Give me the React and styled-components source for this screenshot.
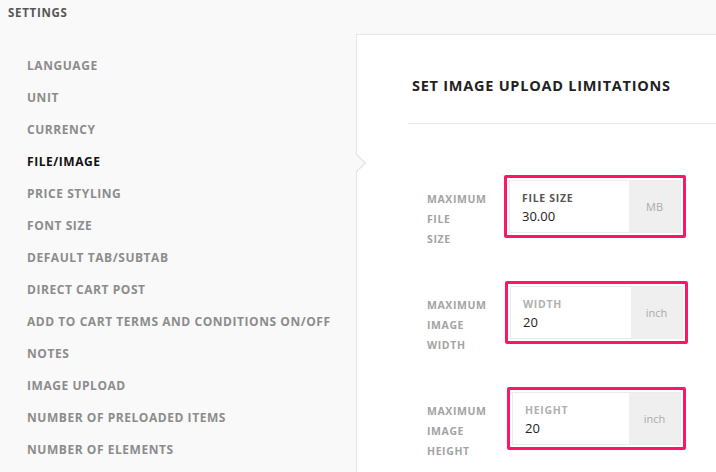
import React from 'react';
import styled, { createGlobalStyle } from 'styled-components';

const GlobalStyle = createGlobalStyle`
  * { box-sizing: border-box; }
  body {
    margin: 0;
    background: #f9f9f9;
    font-family: "Open Sans", "DejaVu Sans", sans-serif;
  }
`;

const menu = [
  'Language',
  'Unit',
  'Currency',
  'File/Image',
  'Price styling',
  'Font size',
  'Default tab/subtab',
  'Direct cart post',
  'Add to cart terms and conditions on/off',
  'Notes',
  'Image upload',
  'Number of preloaded items',
  'Number of elements',
];

// the pink boxes are hand-drawn highlights, so they differ a little
const limits = [
  { label: ['Maximum', 'file', 'size'], field: 'File size', value: '30.00', unit: 'MB', focused: true, width: 182, shift: 0 },
  { label: ['Maximum', 'image', 'width'], field: 'Width', value: '20', unit: 'inch', width: 183, shift: 1 },
  { label: ['Maximum', 'image', 'height'], field: 'Height', value: '20', unit: 'inch', width: 179, shift: 3 },
];

const App = () => (
  <>
    <GlobalStyle />
    <Page>
      <Header>Settings</Header>
      <Body>
        <Sidebar>
          {menu.map((item) => (
            <MenuItem key={item} $active={item === 'File/Image'}>{item}</MenuItem>
          ))}
        </Sidebar>
        <Panel>
          <Arrow />
          <Title>Set image upload limitations</Title>
          <Divider />
          <Rows>
            {limits.map((row) => (
              <Row key={row.field}>
                <Label>
                  {row.label.map((l) => <span key={l}>{l}</span>)}
                </Label>
                <Highlight $width={row.width} $shift={row.shift}>
                  <InputGroup>
                    <Field>
                      <FieldLabel $focused={row.focused}>{row.field}</FieldLabel>
                      <Value>{row.value}</Value>
                    </Field>
                    <Unit>{row.unit}</Unit>
                  </InputGroup>
                </Highlight>
              </Row>
            ))}
          </Rows>
        </Panel>
      </Body>
    </Page>
  </>
);

const Page = styled.div`
  display: flex;
  flex-direction: column;
  height: 472px;
  overflow: hidden;
`;

const Header = styled.div`
  flex-shrink: 0;
  height: 34px;
  padding: 5px 0 0 8px;
  font-size: 11.5px;
  font-weight: 700;
  letter-spacing: 0.7px;
  color: #555;
  text-transform: uppercase;
`;

const Body = styled.div`
  display: flex;
  flex: 1;
  min-height: 0;
`;

const Sidebar = styled.ul`
  flex-shrink: 0;
  width: 356px;
  margin: 0;
  padding: 16px 0 0 27px;
  list-style: none;
`;

const MenuItem = styled.li`
  height: 32px;
  line-height: 32px;
  font-size: 12px;
  font-weight: 700;
  letter-spacing: 0.55px;
  white-space: nowrap;
  text-transform: uppercase;
  color: ${(p) => (p.$active ? '#111' : '#8c8c8c')};
`;

const Panel = styled.section`
  position: relative;
  flex: 1;
  background: #fff;
  border-top: 1px solid #e6e6e6;
  border-left: 1px solid #e6e6e6;
  padding-left: 51px;
`;

const Arrow = styled.div`
  position: absolute;
  left: -8px;
  top: 121px;
  width: 14px;
  height: 14px;
  background: #f9f9f9;
  border-top: 1px solid #e0e0e0;
  border-right: 1px solid #e0e0e0;
  transform: rotate(45deg);
`;

const Title = styled.h2`
  margin: 0;
  padding: 41px 0 0 4px;
  height: 88px;
  font-size: 14.5px;
  font-weight: 700;
  letter-spacing: 0.75px;
  color: #222;
  text-transform: uppercase;
`;

const Divider = styled.hr`
  margin: 0;
  border: 0;
  border-top: 1px solid #e8e8e8;
`;

const Rows = styled.div`
  display: flex;
  flex-direction: column;
  gap: 32px;
  padding: 51px 0 0 19px;
`;

const Row = styled.div`
  display: flex;
  align-items: flex-start;
`;

const Label = styled.div`
  display: flex;
  flex-direction: column;
  width: 77px;
  padding-top: 14px;
  font-size: 10.5px;
  font-weight: 700;
  letter-spacing: 0.6px;
  line-height: 20px;
  color: #a3a3a3;
  text-transform: uppercase;
`;

const Highlight = styled.div`
  width: ${(p) => p.$width}px;
  height: 63px;
  margin-left: ${(p) => p.$shift}px;
  padding: 2px;
  border: 3px solid #ff1764;
  border-radius: 2px;
  background: #fff;
`;

const InputGroup = styled.div`
  display: flex;
  height: 100%;
  border: 1px solid #ececec;
`;

const Field = styled.div`
  flex: 1;
  display: flex;
  flex-direction: column;
  padding: 10px 0 0 12px;
`;

const FieldLabel = styled.span`
  font-size: 10.5px;
  font-weight: 700;
  letter-spacing: 0.7px;
  line-height: 14px;
  color: ${(p) => (p.$focused ? '#555' : '#b0b0b0')};
  text-transform: uppercase;
`;

const Value = styled.span`
  margin-top: 1px;
  font-size: 13px;
  line-height: 20px;
  color: #222;
`;

const Unit = styled.div`
  width: 51px;
  display: flex;
  align-items: center;
  justify-content: center;
  background: #efefef;
  font-size: 11px;
  color: #aaa;
`;

export default App;
